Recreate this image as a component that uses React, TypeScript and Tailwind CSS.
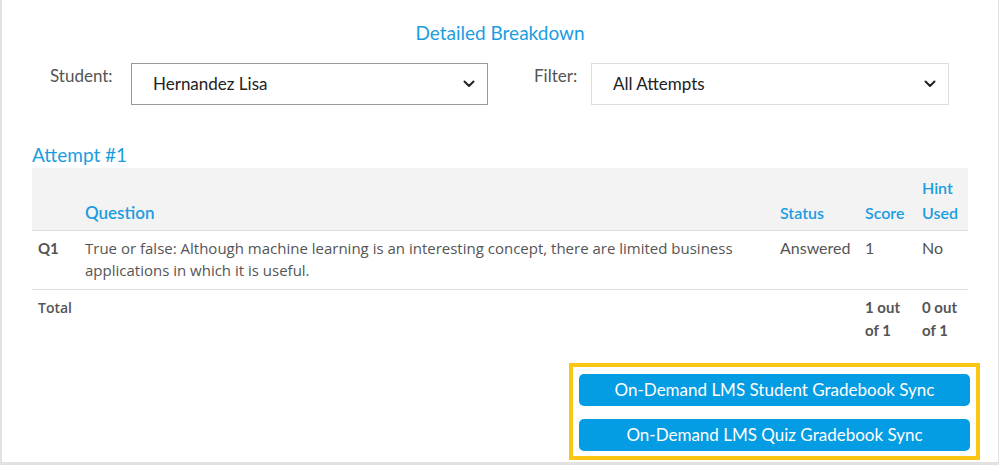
import React from "react";

const Chevron = () => (
  <svg width="12" height="8" viewBox="0 0 12 8" className="absolute right-[12px] top-1/2 -translate-y-1/2">
    <path d="M1.5 1.5 L6 6 L10.5 1.5" fill="none" stroke="#222" strokeWidth="2" strokeLinecap="round" strokeLinejoin="round" />
  </svg>
);

export default function App() {
  const geo = { fontFamily: "Lato, 'Noto Sans', sans-serif" };
  const body = { fontFamily: "'Open Sans', 'Noto Sans', sans-serif" };
  return (
    <div className="w-[999px] h-[465px] bg-white border-l-2 border-r border-b-[3px] border-[#e2e2e2] box-border overflow-hidden" style={geo}>
      <div className="pt-[22px] text-center text-[19px] leading-[22px] text-[#1a9de0]">Detailed Breakdown</div>
      <div className="mt-[19px] flex items-start">
        <div className="ml-[48px] w-[81px] pt-[2px] text-[17px] leading-[22px] text-[#555]">Student:</div>
        <div className="relative w-[357px] h-[42px] border border-[#999] flex items-center pl-[21px] text-[17px] text-[#222]">
          Hernandez Lisa
          <Chevron />
        </div>
        <div className="ml-[46px] w-[57px] pt-[2px] text-[17px] leading-[22px] text-[#555]">Filter:</div>
        <div className="relative w-[358px] h-[42px] border border-[#ddd] flex items-center pl-[21px] text-[17px] text-[#222]">
          All Attempts
          <Chevron />
        </div>
      </div>
      <div className="ml-[30px] mt-[40px] text-[19px] leading-[20px] text-[#1a9de0]">Attempt #1</div>
      <table className="ml-[30px] mt-[3px] w-[936px] border-collapse table-fixed">
        <colgroup>
          <col className="w-[47px]" />
          <col className="w-[695px]" />
          <col className="w-[85px]" />
          <col className="w-[57px]" />
          <col className="w-[52px]" />
        </colgroup>
        <thead>
          <tr className="bg-[#f3f3f3] h-[62px] border-b border-[#ddd] text-[16px] leading-[25px] text-[#1a9de0] font-semibold text-left align-bottom">
            <th className="px-[6px] pb-[5px]"></th>
            <th className="px-[6px] pb-[5px] font-semibold text-[17px]">Question</th>
            <th className="px-[6px] pb-[5px] font-semibold">Status</th>
            <th className="px-[6px] pb-[5px] font-semibold">Score</th>
            <th className="px-[6px] pb-[5px] font-semibold">Hint Used</th>
          </tr>
        </thead>
        <tbody>
          <tr className="border-b border-[#ddd] align-top text-[#555]">
            <td className="px-[6px] pt-[6px] pb-[8px] text-[15px] leading-[22px] font-bold text-[#555]">Q1</td>
            <td className="px-[6px] pt-[6px] pb-[8px] text-[15px] leading-[22px]" style={body}>
              True or false: Although machine learning is an interesting concept, there are limited business applications in which it is useful.
            </td>
            <td className="px-[6px] pt-[6px] pb-[8px] text-[16px] leading-[22px]">Answered</td>
            <td className="px-[6px] pt-[6px] pb-[8px] text-[16px] leading-[22px]">1</td>
            <td className="px-[6px] pt-[6px] pb-[8px] text-[16px] leading-[22px]">No</td>
          </tr>
          <tr className="align-top text-[#555]">
            <td className="px-[6px] pt-[6px] text-[14px] leading-[23px] font-semibold" style={body}>Total</td>
            <td className="px-[6px] pt-[6px]"></td>
            <td className="px-[6px] pt-[6px]"></td>
            <td className="px-[6px] pt-[6px] text-[15px] leading-[23px] font-bold">1 out of 1</td>
            <td className="px-[6px] pt-[6px] text-[15px] leading-[23px] font-bold">0 out of 1</td>
          </tr>
        </tbody>
      </table>
      <div className="flex justify-end mr-[18px] mt-[21px]">
        <div className="w-[411px] h-[97px] border-4 border-[#fbc614] bg-white px-[6px] pt-[7px] flex flex-col gap-[13px]">
          <button className="h-[32px] w-full rounded-[5px] bg-[#049ce2] text-white text-[17px]" style={geo}>
            On-Demand LMS Student Gradebook Sync
          </button>
          <button className="h-[32px] w-full rounded-[5px] bg-[#049ce2] text-white text-[17px]" style={geo}>
            On-Demand LMS Quiz Gradebook Sync
          </button>
        </div>
      </div>
    </div>
  );
}
